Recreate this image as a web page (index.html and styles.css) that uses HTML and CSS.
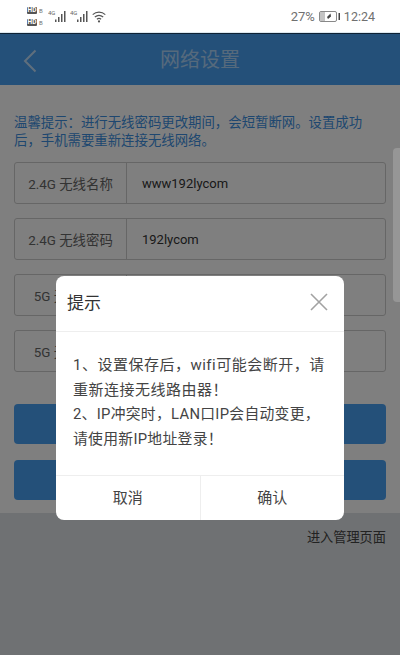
FILE: index.html
```html
<!DOCTYPE html>
<html lang="zh-CN">
<head>
  <meta charset="UTF-8">
  <title>网络设置</title>
  <link rel="stylesheet" href="styles.css">
</head>
<body>
  <div class="status-bar">
    <div class="status-left">
      <div class="hd-col">
        <div class="hd-row"><span class="hd">HD</span><span class="hd-num">B</span></div>
        <div class="hd-row"><span class="hd">HD</span><span class="hd-num">B</span></div>
      </div>
      <svg class="signal" width="18" height="14" viewBox="0 0 18 14">
        <text x="0" y="6" class="net-label">4G</text>
        <rect x="7" y="10.5" width="1.5" height="2.5" /><rect x="10" y="8" width="1.5" height="5" />
        <rect x="13" y="5" width="1.5" height="8" /><rect x="16" y="2" width="1.5" height="11" />
      </svg>
      <svg class="signal" width="18" height="14" viewBox="0 0 18 14">
        <text x="0" y="6" class="net-label">4G</text>
        <rect x="7" y="10.5" width="1.5" height="2.5" /><rect x="10" y="8" width="1.5" height="5" />
        <rect x="13" y="5" width="1.5" height="8" /><rect x="16" y="2" width="1.5" height="11" />
      </svg>
      <svg class="wifi" width="15" height="12" viewBox="0 0 15 12">
        <path d="M0.7 3.6 C4.3 0.4 9.7 0.4 13.3 3.6" />
        <path d="M2.8 6 C5.4 3.9 8.6 3.9 11.2 6" />
        <path d="M4.9 8.2 C6.2 7.2 7.8 7.2 9.1 8.2" />
        <circle cx="7" cy="10.4" r="1.1" />
      </svg>
    </div>
    <div class="status-right">
      <span>27%</span>
      <svg class="battery" width="21" height="11" viewBox="0 0 21 11">
        <rect x="0.5" y="0.5" width="17" height="10" rx="1.5" class="batt-body" />
        <rect x="1" y="1" width="5" height="9" class="batt-fill" />
        <rect x="19.5" y="2" width="1.5" height="7" class="batt-tip" />
        <path d="M11.5 2.5 L8 6 L9 8 L12 5.5 Z" class="batt-tip" />
      </svg>
      <span class="clock">12:24</span>
    </div>
  </div>

  <div class="page">
    <header class="top-bar">
      <svg class="back" width="14" height="24" viewBox="0 0 14 24">
        <path d="M12.5 1.5 L2 12 L12.5 22.5" />
      </svg>
      <h1>网络设置</h1>
    </header>

    <div class="content">
      <p class="tip">温馨提示：进行无线密码更改期间，会短暂断网。设置成功后，手机需要重新连接无线网络。</p>
      <div class="field"><div class="field-label">2.4G 无线名称</div><div class="field-value">www192lycom</div></div>
      <div class="field"><div class="field-label">2.4G 无线密码</div><div class="field-value">192lycom</div></div>
      <div class="field"><div class="field-label">5G 无线名称</div><div class="field-value"></div></div>
      <div class="field"><div class="field-label">5G 无线密码</div><div class="field-value"></div></div>
      <div class="btn"></div>
      <div class="btn"></div>
    </div>

    <div class="page-foot">
      <span class="manage-link">进入管理页面</span>
    </div>

    <div class="overlay"></div>
    <div class="scroll-thumb"></div>

    <div class="dialog">
      <div class="dialog-head">
        <span>提示</span>
        <svg class="close" width="18" height="18" viewBox="0 0 18 18">
          <path d="M1 1 L17 17 M17 1 L1 17" />
        </svg>
      </div>
      <div class="dialog-body">
        <p>1、设置保存后，wifi可能会断开，请重新连接无线路由器！</p>
        <p class="second">2、IP冲突时，LAN口IP会自动变更，请使用新IP地址登录！</p>
      </div>
      <div class="dialog-foot">
        <div class="dialog-btn">取消</div>
        <div class="dialog-btn">确认</div>
      </div>
    </div>
  </div>
</body>
</html>
```

FILE: styles.css
```css
* {
  margin: 0;
  padding: 0;
  box-sizing: border-box;
  font-family: 'Roboto', 'Noto Sans CJK SC', sans-serif;
}
body {
  width: 400px;
  height: 655px;
  overflow: hidden;
  background-color: #fff;
}
.status-bar {
  height: 33px;
  padding: 1px 25px 0 27px;
  display: flex;
  justify-content: space-between;
  align-items: center;
  background-color: #fff;
  border-bottom: 1px solid #dce7ee;
  color: #707070;
}
.status-left {
  display: flex;
  align-items: flex-start;
  gap: 4px;
}
.hd-col {
  width: 17px;
  display: flex;
  flex-direction: column;
  gap: 5px;
}
.hd-row {
  display: flex;
  align-items: center;
  gap: 2px;
}
.hd {
  width: 10px;
  font-size: 6.5px;
  font-weight: 700;
  line-height: 7px;
  text-align: center;
  color: #fff;
  background-color: #555;
  border-radius: 1px;
}
.hd-num {
  font-size: 6px;
  line-height: 7px;
}
.signal {
  margin-top: 2px;
}
.signal rect {
  fill: #555;
}
.net-label {
  font-size: 6px;
  fill: #666;
}
.wifi {
  margin-top: 4px;
}
.wifi path {
  fill: none;
  stroke: #555;
  stroke-width: 1.2;
}
.wifi circle {
  fill: #555;
}
.status-right {
  display: flex;
  align-items: center;
  gap: 4px;
  font-size: 13px;
}
.clock {
  font-size: 12.5px;
}
.batt-body {
  fill: none;
  stroke: #888;
}
.batt-fill {
  fill: #c4c4c4;
}
.batt-tip {
  fill: #444;
}
.page {
  position: relative;
  height: 622px;
}
.top-bar {
  height: 52px;
  padding-bottom: 2px;
  display: flex;
  align-items: center;
  justify-content: center;
  background-color: #48a0f2;
  border-top: 1px solid #1c4468;
}
.top-bar h1 {
  font-size: 20px;
  font-weight: 400;
  color: #fff;
  opacity: 0.55;
}
.back {
  position: absolute;
  left: 23px;
  top: 16px;
}
.back path {
  fill: none;
  stroke: #fff;
  stroke-width: 2;
  opacity: 0.65;
}
.content {
  height: 428px;
  padding: 29px 14px 0;
  background-color: #fff;
}
.tip {
  font-size: 13.4px;
  line-height: 18px;
  height: 48px;
  color: #3d8fe0;
}
.field {
  height: 42px;
  margin-bottom: 14px;
  display: flex;
  border: 1px solid #ccc;
  border-radius: 3px;
  font-size: 13.4px;
}
.field-label {
  width: 112px;
  flex-shrink: 0;
  display: flex;
  align-items: center;
  justify-content: center;
  color: #666;
  border-right: 1px solid #ccc;
}
.field-value {
  flex: 1;
  display: flex;
  align-items: center;
  padding-left: 15px;
  font-size: 13px;
  color: #333;
}
.btn {
  height: 40px;
  margin-bottom: 16px;
  border-radius: 4px;
  background-color: #48a0f2;
}
.field + .btn {
  margin-top: 32px;
}
.page-foot {
  height: 142px;
  padding: 14px 14px 0;
  text-align: right;
  background-color: #dfe3e6;
}
.manage-link {
  font-size: 13.2px;
  color: #444;
}
.overlay {
  position: absolute;
  inset: 0;
  background-color: rgba(0, 0, 0, 0.5);
}
.scroll-thumb {
  position: absolute;
  right: 0;
  top: 115px;
  height: 154px;
  width: 7px;
  background-color: #969696;
  border-radius: 4px 0 0 4px;
}
.dialog {
  position: absolute;
  left: 56px;
  top: 243px;
  width: 288px;
  height: 244px;
  display: flex;
  flex-direction: column;
  background-color: #fff;
  border-radius: 8px;
  overflow: hidden;
}
.dialog-head {
  height: 56px;
  padding: 0 16px 4px 11px;
  display: flex;
  align-items: center;
  justify-content: space-between;
  font-size: 17px;
  color: #333;
  border-bottom: 1px solid #eee;
}
.close path {
  fill: none;
  stroke: #a2a2a2;
  stroke-width: 1.6;
}
.dialog-body {
  flex: 1;
  padding: 21px 17px 0;
  font-size: 15px;
  letter-spacing: 0.5px;
  line-height: 24.5px;
  color: #444;
}
.dialog-body .second {
  font-size: 14.8px;
  letter-spacing: 0.3px;
}
.dialog-foot {
  height: 45px;
  display: flex;
  border-top: 1px solid #eee;
}
.dialog-btn {
  flex: 1;
  display: flex;
  align-items: center;
  justify-content: center;
  padding-bottom: 3px;
  font-size: 15px;
  color: #444;
}
.dialog-btn + .dialog-btn {
  border-left: 1px solid #eee;
}
```
